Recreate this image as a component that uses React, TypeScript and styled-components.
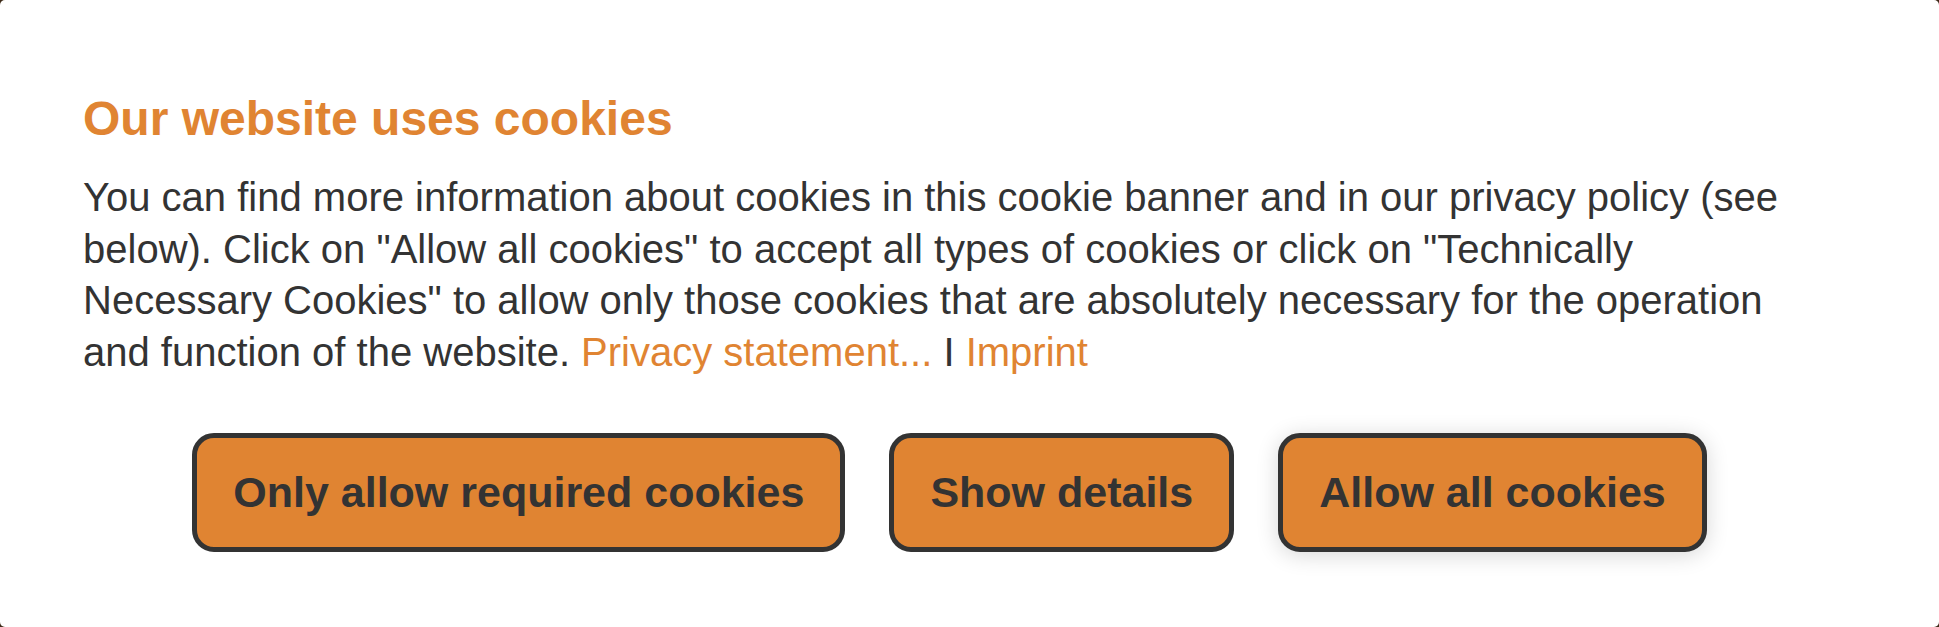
import React from 'react';
import styled, { createGlobalStyle } from 'styled-components';

const GlobalStyle = createGlobalStyle`
  html,
  body {
    margin: 0;
    padding: 0;
    background: #3d2a18;
  }
  body {
    font-family: 'Liberation Sans', Arial, Helvetica, sans-serif;
  }
`;

const Banner = styled.section`
  box-sizing: border-box;
  width: 1939px;
  height: 627px;
  padding: 91px 123px 0 83px;
  background: #ffffff;
  border-radius: 5px;
  overflow: hidden;
`;

const Title = styled.h2`
  margin: 0 0 25px;
  font-size: 48px;
  line-height: 56px;
  font-weight: 700;
  color: #e08432;
`;

const Text = styled.p`
  margin: 0;
  font-size: 40px;
  line-height: 51.5px;
  color: #333333;
`;

const Link = styled.a`
  color: #e08432;
  text-decoration: none;
`;

const ButtonRow = styled.div`
  display: flex;
  justify-content: center;
  gap: 44px;
  margin-top: 55px;
`;

const Button = styled.button<{ $focused?: boolean }>`
  box-sizing: border-box;
  padding: 29px 36px 30px;
  border: 5px solid #333333;
  border-radius: 22px;
  background: #e08432;
  color: #333333;
  font-family: 'Liberation Sans', Arial, Helvetica, sans-serif;
  font-size: 43px;
  line-height: 50px;
  font-weight: 700;
  white-space: nowrap;
  cursor: pointer;
  box-shadow: ${(p) => (p.$focused ? '0 3px 22px rgba(0, 0, 0, 0.16)' : 'none')};
`;

const App: React.FC = () => {
  return (
    <>
      <GlobalStyle />
      <Banner>
        <Title>Our website uses cookies</Title>
        <Text>
          You can find more information about cookies in this cookie banner and in our privacy policy (see
          below). Click on "Allow all cookies" to accept all types of cookies or click on "Technically
          Necessary Cookies" to allow only those cookies that are absolutely necessary for the operation and
          function of the website. <Link href="#">Privacy statement...</Link> I <Link href="#">Imprint</Link>
        </Text>
        <ButtonRow>
          <Button>Only allow required cookies</Button>
          <Button>Show details</Button>
          <Button $focused>Allow all cookies</Button>
        </ButtonRow>
      </Banner>
    </>
  );
};

export default App;
